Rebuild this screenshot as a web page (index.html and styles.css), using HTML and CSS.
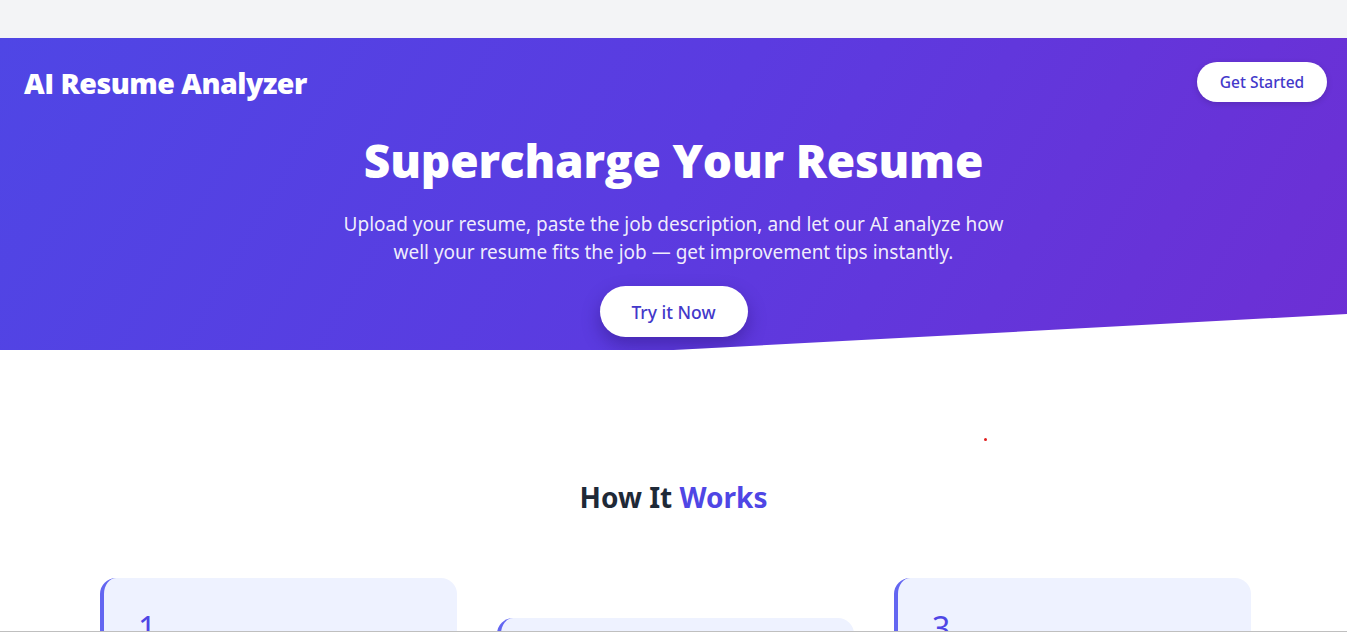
FILE: index.html
```html
<!DOCTYPE html>
<html lang="en">
<head>
<meta charset="utf-8">
<title>AI Resume Analyzer</title>
<link rel="stylesheet" href="styles.css">
</head>
<body>
<div class="topbar"></div>
<section class="hero">
  <header class="nav">
    <div class="logo">AI Resume Analyzer</div>
    <button class="btn-nav">Get Started</button>
  </header>
  <div class="hero-body">
    <h1 class="hero-title">Supercharge Your Resume</h1>
    <p class="hero-sub">Upload your resume, paste the job description, and let our AI analyze how well your resume fits the job — get improvement tips instantly.</p>
    <button class="btn-try">Try it Now</button>
  </div>
</section>
<main class="how">
  <span class="dot"></span>
  <h2 class="how-title">How It <span class="accent">Works</span></h2>
  <div class="cards">
    <div class="card">
      <div class="card-num">1</div>
    </div>
    <div class="card card-mid">
      <div class="card-num">2</div>
    </div>
    <div class="card">
      <div class="card-num">3</div>
    </div>
  </div>
</main>
<div class="bottom-line"></div>
</body>
</html>
```
FILE: styles.css
```css
* { box-sizing: border-box; }
html, body { margin: 0; padding: 0; }
body {
  font-family: "Noto Sans", "Open Sans", Arial, sans-serif;
  background: #ffffff;
  color: #1f2937;
}
.topbar { height: 38px; background: #f3f4f6; }
.hero {
  height: 312px;
  background: linear-gradient(120deg, #4f46e5 0%, #5b3be0 50%, #6d2fd4 100%);
  clip-path: polygon(0 0, 100% 0, 100% 88.5%, 50% 100%, 0 100%);
  color: #fff;
}
.nav {
  display: flex;
  justify-content: space-between;
  align-items: center;
  padding: 24px 20px 0 24px;
  height: 64px;
}
.logo {
  font-family: "Open Sans", "Noto Sans", sans-serif;
  font-weight: 800;
  font-size: 28.5px;
  letter-spacing: -0.5px;
  margin-top: 2px;
}
.btn-nav {
  font-family: "Noto Sans", sans-serif;
  background: #fff;
  color: #4338ca;
  border: none;
  border-radius: 999px;
  height: 40px;
  width: 130px;
  font-size: 15.5px;
  font-weight: 500;
  box-shadow: 0 2px 6px rgba(0,0,0,0.15);
}
.hero-body {
  display: flex;
  flex-direction: column;
  align-items: center;
  text-align: center;
  padding-top: 30px;
}
.hero-title {
  margin: 0;
  font-family: "Open Sans", "Noto Sans", sans-serif;
  font-weight: 800;
  font-size: 46px;
  line-height: 56px;
  letter-spacing: -0.2px;
}
.hero-sub {
  margin: 22px 0 0;
  max-width: 672px;
  font-size: 19px;
  line-height: 28px;
  color: rgba(255,255,255,0.92);
}
.btn-try {
  margin-top: 20px;
  font-family: "Noto Sans", sans-serif;
  background: #fff;
  color: #4338ca;
  border: none;
  border-radius: 999px;
  width: 148px;
  height: 51px;
  font-size: 17.5px;
  font-weight: 500;
  box-shadow: 0 8px 18px rgba(30,10,90,0.35);
}
.how {
  position: relative;
  padding-top: 128px;
}
.dot {
  position: absolute;
  left: 984px;
  top: 88px;
  width: 3px;
  height: 3px;
  background: #e11d1d;
  border-radius: 50%;
}
.how-title {
  margin: 0;
  text-align: center;
  font-size: 28px;
  font-weight: 700;
  line-height: 38px;
  color: #1f2937;
}
.accent { color: #4f46e5; }
.cards {
  width: 1155px;
  padding-left: 4px;
  margin: 62px auto 0;
  display: grid;
  grid-template-columns: repeat(3, 1fr);
  gap: 40px;
  align-items: start;
}
.card {
  background: #eef2ff;
  border-left: 4px solid #6366f1;
  border-radius: 16px;
  padding: 30px 34px;
  min-height: 200px;
}
.card-mid { margin-top: 40px; }
.card-num {
  font-size: 32px;
  line-height: 40px;
  color: #4f46e5;
}
.bottom-line {
  position: fixed;
  left: 0; right: 0; bottom: 0;
  height: 1px;
  background: #bfbfbf;
}
```
